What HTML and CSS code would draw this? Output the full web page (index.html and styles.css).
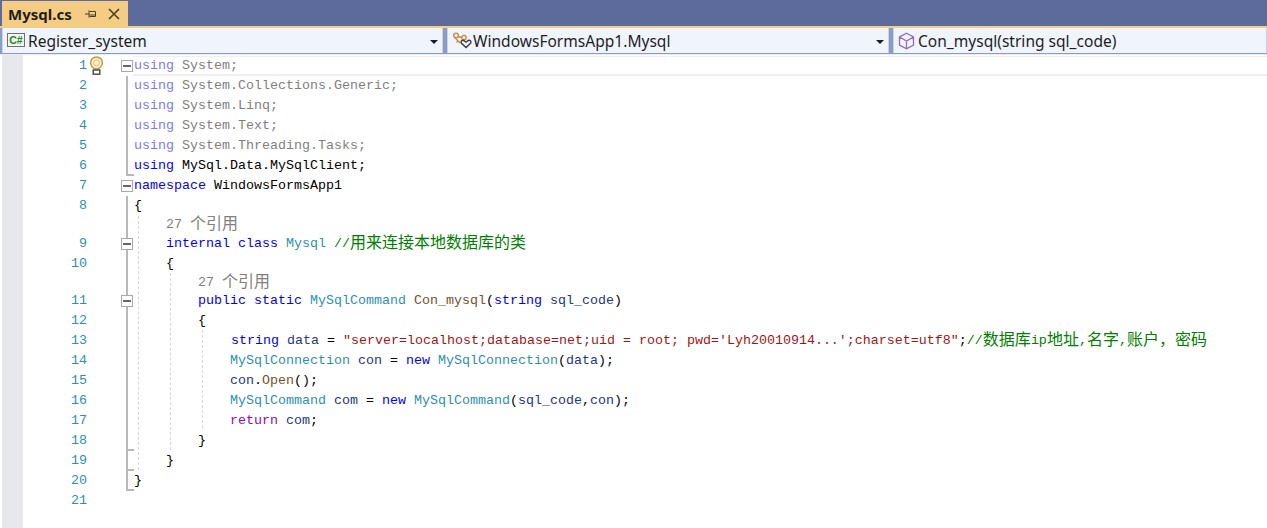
FILE: index.html
```html
<!DOCTYPE html>
<html lang="zh-CN">
<head>
<meta charset="utf-8">
<title>Mysql.cs</title>
<link rel="stylesheet" href="styles.css">
</head>
<body>
<div class="window">
  <div class="tabstrip">
    <div class="tab">
      <span class="tab-title">Mysql.cs</span>
      <svg class="pin" width="14" height="14" viewBox="0 0 14 14"><path d="M1 7h4M5 3.5v7M5.5 4.5h6v5h-6M5.5 8h6" fill="none" stroke="#4a3f2a" stroke-width="1"/></svg>
      <svg class="close" width="14" height="14" viewBox="0 0 14 14"><path d="M2 2l10 10M12 2L2 12" fill="none" stroke="#4a3f2a" stroke-width="1.6"/></svg>
    </div>
  </div>
  <div class="navbar">
    <div class="combo combo-project">
      <svg class="ico" width="19" height="15" viewBox="0 0 19 15"><rect x="0.5" y="0.5" width="17" height="13" fill="#f4f6f4" stroke="#6e6e6e"/><text x="2.2" y="11" class="csharp">C#</text></svg>
      <span class="combo-text">Register_system</span>
      <span class="arrow"></span>
    </div>
    <div class="combo combo-class">
      <svg class="ico" width="20" height="19" viewBox="0 0 20 19"><g fill="none" stroke="#c8873a" stroke-width="1.3"><circle cx="4" cy="4.5" r="2.4"/><circle cx="12" cy="6.5" r="2.2"/><path d="M6 5.5l4 1M3 6.8L8 12M6 10l-1.5 1.5"/></g><path d="M14 16.5l-4.5-4.3c-1.6-2 1.4-4 3-2.2l1.5 1.2 1.5-1.2c1.6-1.8 4.6.2 3 2.2z" fill="#f0f4fd" stroke="#3c3c3c" stroke-width="1.4"/></svg>
      <span class="combo-text">WindowsFormsApp1.Mysql</span>
      <span class="arrow"></span>
    </div>
    <div class="combo combo-member">
      <svg class="ico" width="17" height="18" viewBox="0 0 17 18"><path d="M8.5 1.2l7 3.8v8l-7 3.8-7-3.8V5zM1.5 5l7 4 7-4M8.5 9v7.8" fill="#f6f2fb" stroke="#8f6cc0" stroke-width="1.3"/></svg>
      <span class="combo-text">Con_mysql(string sql_code)</span>
    </div>
  </div>
  <div class="editor">
    <div class="strip"></div>
    <div class="code">
      <i class="guide guide-a"></i>
      <i class="guide guide-b"></i>
      <i class="guide guide-c"></i>

      <div class="row current"><span class="num">1</span><span class="hint"><svg width="15" height="19" viewBox="0 0 15 19"><circle cx="7.5" cy="6.8" r="5.9" fill="#fbf3d6" stroke="#c79a3c" stroke-width="1.5"/><circle cx="7.5" cy="6.8" r="3" fill="none" stroke="#e0bd6c"/><path d="M5.5 12.5v2M9.5 12.5v2" stroke="#c79a3c"/><rect x="4.2" y="14" width="6.6" height="4.2" fill="#fff" stroke="#444" stroke-width="1.4"/></svg></span><span class="fold"><b class="box"></b></span><pre class="src"><span class="faded-kw">using</span> <span class="faded">System;</span></pre></div>
      <div class="row"><span class="num">2</span><span class="hint"></span><span class="fold line"></span><pre class="src"><span class="faded-kw">using</span> <span class="faded">System.Collections.Generic;</span></pre></div>
      <div class="row"><span class="num">3</span><span class="hint"></span><span class="fold line"></span><pre class="src"><span class="faded-kw">using</span> <span class="faded">System.Linq;</span></pre></div>
      <div class="row"><span class="num">4</span><span class="hint"></span><span class="fold line"></span><pre class="src"><span class="faded-kw">using</span> <span class="faded">System.Text;</span></pre></div>
      <div class="row"><span class="num">5</span><span class="hint"></span><span class="fold line"></span><pre class="src"><span class="faded-kw">using</span> <span class="faded">System.Threading.Tasks;</span></pre></div>
      <div class="row"><span class="num">6</span><span class="hint"></span><span class="fold line end"></span><pre class="src"><span class="kw">using</span> MySql.Data.MySqlClient;</pre></div>
      <div class="row"><span class="num">7</span><span class="hint"></span><span class="fold"><b class="box"></b></span><pre class="src"><span class="kw">namespace</span> WindowsFormsApp1</pre></div>
      <div class="row"><span class="num">8</span><span class="hint"></span><span class="fold line"></span><pre class="src">{</pre></div>
      <div class="row lens lens-tall"><span class="num"></span><span class="hint"></span><span class="fold line"></span><pre class="src lens-text">    27 <span class="zh">个引用</span></pre></div>
      <div class="row"><span class="num">9</span><span class="hint"></span><span class="fold line"><b class="box"></b></span><pre class="src">    <span class="kw">internal</span> <span class="kw">class</span> <span class="type">Mysql</span> <span class="cm">//<span class="zh">用来连接本地数据库的类</span></span></pre></div>
      <div class="row"><span class="num">10</span><span class="hint"></span><span class="fold line"></span><pre class="src">    {</pre></div>
      <div class="row lens"><span class="num"></span><span class="hint"></span><span class="fold line"></span><pre class="src lens-text">        27 <span class="zh">个引用</span></pre></div>
      <div class="row"><span class="num">11</span><span class="hint"></span><span class="fold line"><b class="box"></b></span><pre class="src">        <span class="kw">public</span> <span class="kw">static</span> <span class="type">MySqlCommand</span> <span class="fn">Con_mysql</span>(<span class="kw">string</span> <span class="var">sql_code</span>)</pre></div>
      <div class="row"><span class="num">12</span><span class="hint"></span><span class="fold line"></span><pre class="src">        {</pre></div>
      <div class="row"><span class="num">13</span><span class="hint"></span><span class="fold line"></span><pre class="src nudge">            <span class="kw">string</span> <span class="var">data</span> = <span class="str">"server=localhost;database=net;uid = root; pwd='Lyh20010914...';charset=utf8"</span>;<span class="cm">//<span class="zh">数据库</span>ip<span class="zh">地址</span>,<span class="zh">名字</span>,<span class="zh">账户，密码</span></span></pre></div>
      <div class="row"><span class="num">14</span><span class="hint"></span><span class="fold line"></span><pre class="src">            <span class="type">MySqlConnection</span> <span class="var">con</span> = <span class="kw">new</span> <span class="type">MySqlConnection</span>(<span class="var">data</span>);</pre></div>
      <div class="row"><span class="num">15</span><span class="hint"></span><span class="fold line"></span><pre class="src">            <span class="var">con</span>.<span class="fn">Open</span>();</pre></div>
      <div class="row"><span class="num">16</span><span class="hint"></span><span class="fold line"></span><pre class="src">            <span class="type">MySqlCommand</span> <span class="var">com</span> = <span class="kw">new</span> <span class="type">MySqlCommand</span>(<span class="var">sql_code</span>,<span class="var">con</span>);</pre></div>
      <div class="row"><span class="num">17</span><span class="hint"></span><span class="fold line"></span><pre class="src">            <span class="ctl">return</span> <span class="var">com</span>;</pre></div>
      <div class="row"><span class="num">18</span><span class="hint"></span><span class="fold line end"></span><pre class="src">        }</pre></div>
      <div class="row"><span class="num">19</span><span class="hint"></span><span class="fold line end"></span><pre class="src">    }</pre></div>
      <div class="row"><span class="num">20</span><span class="hint"></span><span class="fold line end"></span><pre class="src">}</pre></div>
      <div class="row"><span class="num">21</span><span class="hint"></span><span class="fold"></span><pre class="src"></pre></div>
    </div>
  </div>
</div>
</body>
</html>
```
FILE: styles.css
```css
* { box-sizing: border-box; }
html, body { margin: 0; height: 100%; overflow: hidden; }
body { background: #fff; font-family: "Noto Sans", sans-serif; }
.window { width: 1267px; height: 528px; display: flex; flex-direction: column; background: #5c6b9b; }

.tabstrip { height: 28px; flex: none; padding: 1px 0 0 2px; background: #5c6b9b; border-bottom: 2px solid #f5cc84; }
.tab { width: 126px; height: 25px; background: #f5cc84; display: flex; align-items: center; padding-left: 6px; }
.tab-title { font-size: 15px; font-weight: 700; color: #1e1e1e; width: 76px; font-family: "Noto Sans", sans-serif; }
.pin { margin-right: 9px; }

.navbar { height: 26px; flex: none; display: flex; gap: 4px; background: #8b9cc5; padding: 0 0 1px 2px; }
.combo { height: 25px; display: flex; align-items: center; background: #f0f4fd; position: relative; padding-left: 4px; border: 1px solid #c9d2e6; border-width: 0 1px; }
.combo-project { width: 441px; }
.combo-class { width: 442px; }
.combo-member { flex: 1; gap: 3px; padding-left: 4px; }
.combo-class .ico { margin-right: 1px; }
.combo-project .ico { margin-right: 2px; }
.combo-text { font-size: 15.55px; color: #1e1e1e; white-space: nowrap; }
.arrow { position: absolute; right: 4px; top: 12px; width: 0; height: 0; border: 4px solid transparent; border-top-color: #1e1e1e; border-bottom: 0; }
.csharp { font: 700 10.5px "Liberation Sans", sans-serif; fill: #1c8a1c; }

.editor { flex: 1; display: flex; padding-left: 2px; background: #fff; border-top: 1px solid #e9ebf2; }
.strip { width: 21px; background: #e7e8ec; flex: none; }
.code { flex: 1; background: #fff; position: relative; padding-top: 1px; }

.row { display: flex; height: 20px; font: 13.33px/20px "Liberation Mono", "Noto Sans CJK SC", monospace; color: #000; }
.row.lens { height: 17px; }
.row.lens-tall { height: 18px; }
.num { width: 64px; text-align: right; color: #2b91af; flex: none; }
.hint { width: 34px; flex: none; padding-left: 2px; }
.hint svg { display: block; }
.fold { width: 12px; flex: none; position: relative; }
.fold.line::before { content: ""; position: absolute; left: 5px; top: 0; bottom: 0; width: 2px; background: #b9b9b9; }
.fold.line.end::before { bottom: 1px; }
.fold.line.end::after { content: ""; position: absolute; left: 5px; bottom: 0; width: 8px; height: 2px; background: #b9b9b9; }
.box { position: absolute; left: 0; top: 4px; width: 12px; height: 12px; border: 1px solid #a9a9a9; background: #fff; z-index: 1; }
.box::after { content: ""; position: absolute; left: 1px; right: 1px; top: 4px; height: 2px; background: #666; }

.src { margin: 0 0 0 1px; font: inherit; white-space: pre; flex: 1; }
.src.nudge { margin-left: 2px; }
.current .src { margin-left: 0; padding-left: 1px; border-top: 1px solid #eeeef3; border-bottom: 2px solid #eeeef3; line-height: 18px; height: 20px; }
.zh { font-family: "Noto Sans CJK SC", sans-serif; font-size: 16px; line-height: 0; vertical-align: -1px; }
.lens .src { line-height: 17px; }
.lens-text { color: #808080; }

.kw { color: #0000ff; }
.faded-kw { color: #7a7af5; }
.faded { color: #7f7f7f; }
.type { color: #2b91af; }
.fn { color: #74531f; }
.var { color: #1f377f; }
.str { color: #a31515; }
.cm { color: #008000; }
.ctl { color: #8f08c4; }

.guide { position: absolute; width: 0; border-left: 1px dashed #d6d6d6; }
.guide-a { left: 115px; top: 161px; height: 254px; }
.guide-b { left: 147px; top: 218px; height: 177px; }
.guide-c { left: 179px; top: 275px; height: 98px; }
```
